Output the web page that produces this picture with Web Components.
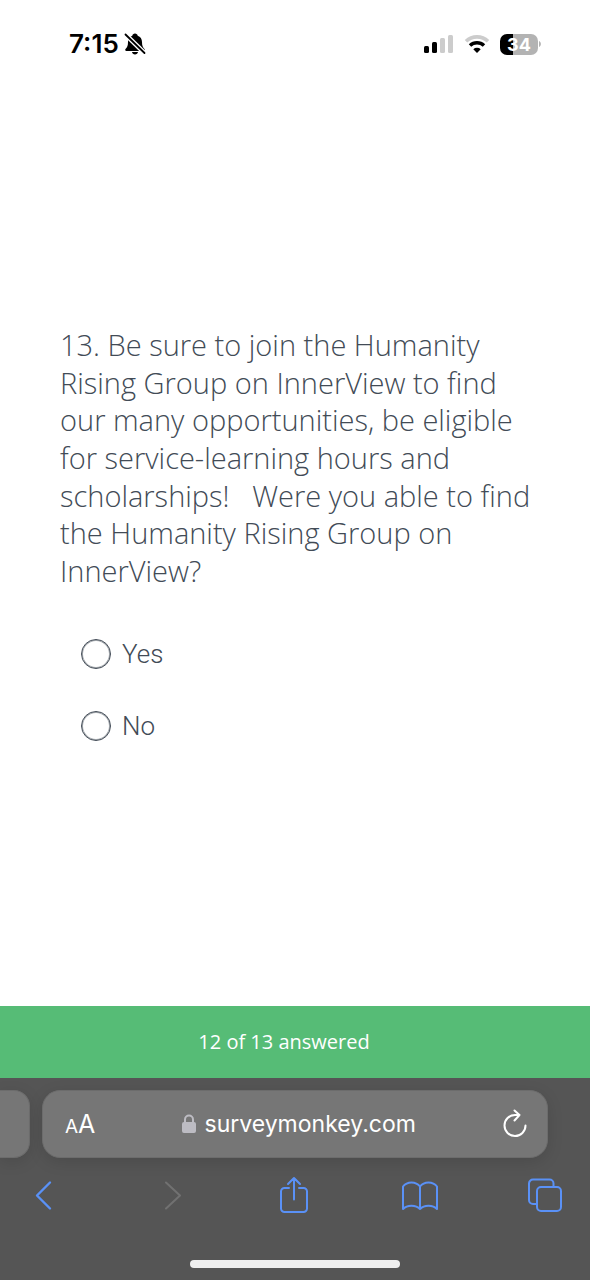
<!DOCTYPE html>
<html lang="en">
<head>
<meta charset="utf-8">
<meta name="viewport" content="width=device-width, initial-scale=1">
<title>Survey</title>
<style>
  body { margin: 0; background: #fff; font-family: Inter, "Liberation Sans", sans-serif; }
</style>
</head>
<body>
<survey-screen></survey-screen>

<template id="survey-screen">
  <style>
    :host { display: flex; flex-direction: column; min-height: 100vh; }
    main { flex: 1; padding: 238px 60px 40px; }
  </style>
  <status-bar time="7:15" battery="34"></status-bar>
  <main>
    <survey-question>
      <span slot="title">13. Be sure to join the Humanity<br>Rising Group on InnerView to find<br>our many opportunities, be eligible<br>for service-learning hours and<br>scholarships! &nbsp; Were you able to find<br>the Humanity Rising Group on<br>InnerView?</span>
      <survey-option value="yes">Yes</survey-option>
      <survey-option value="no">No</survey-option>
    </survey-question>
  </main>
  <survey-progress>12 of 13 answered</survey-progress>
  <browser-bar>surveymonkey.com</browser-bar>
</template>

<template id="status-bar">
  <style>
    :host { display: flex; justify-content: space-between; align-items: center; height: 88px; padding: 0 48px 0 69px; box-sizing: border-box; color: #000; }
    div { display: flex; align-items: center; }
    .time { gap: 5px; font-size: 26px; line-height: 32px; font-weight: 600; }
    .state { gap: 10px; }
    .level { width: 38px; height: 21px; border-radius: 7px; justify-content: center; background: linear-gradient(90deg, #000 34%, #b3b3b3 34%); color: #fff; font-size: 18px; line-height: 21px; font-weight: 700; }
    svg { display: block; }
  </style>
  <div class="time"><span id="time"></span>
    <svg width="22" height="22" viewBox="0 0 22 22" aria-hidden="true">
      <path d="M11 .5c1.500 0 2.500 1 2.700 2.200 2.800 1 4.300 3.200 4.300 6.300 0 3.800.8 5.500 2.500 7.100.6.700.2 1.900-.8 1.900H2.300c-1 0-1.400-1.200-.8-1.900C3.200 14.500 4 12.800 4 9c0-3.100 1.500-5.300 4.300-6.300C8.500 1.500 9.500.5 11 .5zM8 19h6c-.2 1.500-1.500 2.500-3 2.500S8.200 20.500 8 19z"/>
      <path d="M1.500 1.500 20.500 20" stroke="#fff" stroke-width="4.600"/>
      <path d="M1.500 1.500 20.500 20" stroke="#000" stroke-width="1.800" stroke-linecap="round"/>
    </svg>
  </div>
  <div class="state">
    <svg width="30" height="20" viewBox="0 0 30 20" aria-hidden="true">
      <rect y="12" width="5" height="7" rx="1.500"/><rect x="8" y="8" width="5" height="11" rx="1.500"/>
      <g fill="#ccc"><rect x="16" y="4" width="5" height="15" rx="1.500"/><rect x="24" y="1" width="5" height="18" rx="1.500"/></g>
    </svg>
    <svg width="26" height="20" viewBox="0 0 26 20" fill="none" aria-hidden="true">
      <path d="M2 7.300a16 16 0 0 1 22 0" stroke="#ccc" stroke-width="3.600"/>
      <path d="M6 11.500a10.300 10.300 0 0 1 14 0" stroke="#000" stroke-width="3.500"/>
      <path d="M9.300 15.300a5.400 5.400 0 0 1 7.400 0L13 19z" fill="#000"/>
    </svg>
    <div><div class="level" id="battery"></div>
      <svg width="4" height="8" viewBox="0 0 4 8" aria-hidden="true"><path d="M1 1c2.500.8 2.500 5.200 0 6z" fill="#b3b3b3"/></svg>
    </div>
  </div>
</template>

<template id="survey-question">
  <style>
    :host { display: block; color: #424b56; font-family: "Open Sans", "Noto Sans", sans-serif; font-weight: 350; }
    fieldset { border: 0; margin: 0; padding: 0; min-width: 0; }
    legend { padding: 0; margin-bottom: 28px; font-size: 29px; line-height: 1.3; white-space: nowrap; }
    .options { padding-left: 21px; }
  </style>
  <fieldset>
    <legend><slot name="title"></slot></legend>
    <div class="options"><slot></slot></div>
  </fieldset>
</template>

<template id="survey-option">
  <style>
    :host { display: block; font-family: Roboto, sans-serif; font-weight: 300; font-size: 26px; line-height: 32px; }
    label { display: flex; align-items: center; gap: 11px; height: 72px; }
    input { appearance: none; box-sizing: border-box; width: 30px; height: 30px; margin: 0; border: 1px solid #424b56; border-radius: 50%; box-shadow: inset 0 0 0 1px #a0a5aa; background: #fff; }
    input:checked { background: radial-gradient(circle, #424b56 45%, #fff 50%); }
  </style>
  <label><input type="radio" name="answer"><slot></slot></label>
</template>

<template id="survey-progress">
  <style>
    :host { display: flex; align-items: center; justify-content: center; height: 72px; padding-right: 22px; background: #56bc76; color: #fff; font-family: "Open Sans", sans-serif; font-size: 20px; line-height: 28px; }
  </style>
  <slot></slot>
</template>

<template id="browser-bar">
  <style>
    :host { display: block; background: #555; height: 202px; box-sizing: border-box; padding-top: 12px; overflow: hidden; }
    button { display: flex; align-items: center; justify-content: center; margin: 0; padding: 0; border: 0; background: none; color: #5a91f6; font: inherit; }
    svg { display: block; fill: none; stroke: currentColor; stroke-width: 2; stroke-linecap: round; stroke-linejoin: round; }
    .tabs { display: flex; gap: 12px; padding-right: 42px; }
    .peek, .address { height: 68px; box-sizing: border-box; background: #767676; border: 1px solid #6c6c6c; box-shadow: 0 4px 16px rgba(0,0,0,.12); }
    .peek { width: 30px; border-left: 0; border-radius: 0 16px 16px 0; }
    .address { flex: 1; display: flex; align-items: center; justify-content: space-between; padding: 0 19px 0 22px; border-radius: 18px; color: #fff; }
    .address button { color: #fff; }
    .size { align-items: baseline; }
    .small { font-size: 19px; } .large { font-size: 25px; }
    .site { display: flex; align-items: center; gap: 9px; font-size: 23px; line-height: 32px; }
    nav { display: flex; justify-content: space-between; align-items: center; padding: 0 26px 0 24px; height: 74px; }
    nav button { width: 38px; height: 40px; }
    nav .off { color: #717171; }
    .home { width: 210px; height: 8px; margin: 28px auto 0; border-radius: 4px; background: #eee; }
  </style>
  <div class="tabs">
    <div class="peek"></div>
    <div class="address">
      <button class="size" aria-label="Page settings"><span class="small">A</span><span class="large">A</span></button>
      <div class="site">
        <svg width="14" height="20" viewBox="0 0 14 20" style="color:#bdbcc3" aria-hidden="true"><rect x="1" y="9" width="12" height="9" rx="1" fill="currentColor"/><path d="M3 9V5.500a4 4 0 0 1 8 0V9"/></svg>
        <span><slot></slot></span>
      </div>
      <button aria-label="Reload"><svg width="26" height="30" viewBox="0 0 26 30"><path d="M23.500 16.500A10.500 10.500 0 1 1 13 6h4.500M12.500 1.500l5 4.500-5 5.500"/></svg></button>
    </div>
  </div>
  <nav>
    <button aria-label="Back"><svg width="24" height="40" viewBox="0 0 24 40"><path d="M19 7.500 6 20.500l13 13" stroke-width="2.400"/></svg></button>
    <button class="off" aria-label="Forward" disabled><svg width="24" height="40" viewBox="0 0 24 40"><path d="m9 7.500 14 13-14 13"/></svg></button>
    <button aria-label="Share"><svg width="30" height="40" viewBox="0 0 30 40"><path d="M10 13H5.500A3.500 3.500 0 0 0 2 16.500v17A3.500 3.500 0 0 0 5.500 37h19a3.500 3.500 0 0 0 3.500-3.500v-17a3.500 3.500 0 0 0-3.500-3.500H20M15 24.500V3M9 9l6-6 6 6"/></svg></button>
    <button aria-label="Bookmarks"><svg width="38" height="40" viewBox="0 0 38 40"><path d="M19 11.500c-4-5.500-13-5.500-17 0V34c4-4.500 13-4.500 17 0 4-4.500 13-4.500 17 0V11.500c-4-5.500-13-5.500-17 0V34"/></svg></button>
    <button aria-label="Tabs"><svg width="36" height="40" viewBox="0 0 36 40"><rect x="10" y="12" width="24" height="24" rx="4"/><path d="M10 29H6a4 4 0 0 1-4-4V8.500a4 4 0 0 1 4-4h16.500a4 4 0 0 1 4 4V12"/></svg></button>
  </nav>
  <div class="home"></div>
</template>

<script>
  class TemplateElement extends HTMLElement {
    constructor() {
      super();
      this.attachShadow({ mode: "open" })
        .append(document.getElementById(this.localName).content.cloneNode(true));
    }
  }
  customElements.define("status-bar", class extends TemplateElement {
    connectedCallback() {
      for (const key of ["time", "battery"])
        this.shadowRoot.getElementById(key).textContent = this.getAttribute(key);
    }
  });
  customElements.define("survey-option", class extends TemplateElement {
    connectedCallback() {
      const input = this.shadowRoot.querySelector("input");
      input.value = this.getAttribute("value");
      // Radio groups do not span shadow roots, so siblings are cleared here.
      input.addEventListener("change", () => {
        for (const other of this.parentElement.querySelectorAll("survey-option"))
          if (other !== this) other.shadowRoot.querySelector("input").checked = false;
      });
    }
  });
  for (const name of ["survey-question", "survey-progress", "browser-bar", "survey-screen"])
    customElements.define(name, class extends TemplateElement {});
</script>
</body>
</html>
